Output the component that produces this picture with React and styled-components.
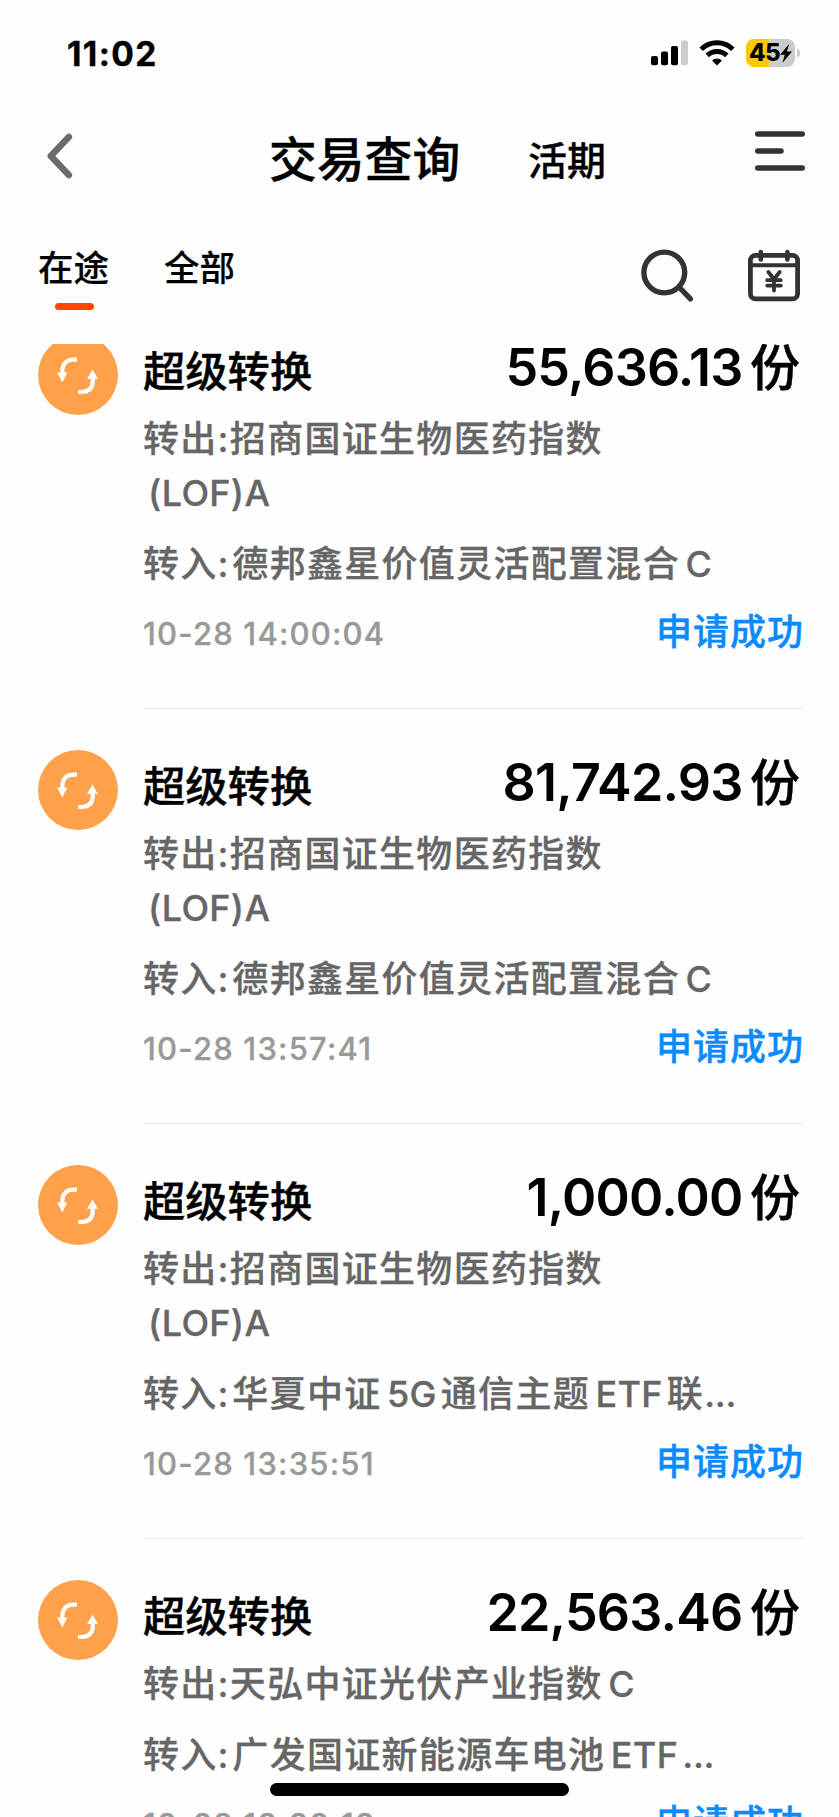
import React from "react"
import styled, { createGlobalStyle } from "styled-components"

const records = [
  {
    id: 1,
    amount: "55,636.13",
    from: ["招商国证生物医药指数", "(LOF)A"],
    to: "德邦鑫星价值灵活配置混合C",
    time: "10-28 14:00:04",
  },
  {
    id: 2,
    amount: "81,742.93",
    from: ["招商国证生物医药指数", "(LOF)A"],
    to: "德邦鑫星价值灵活配置混合C",
    time: "10-28 13:57:41",
  },
  {
    id: 3,
    amount: "1,000.00",
    from: ["招商国证生物医药指数", "(LOF)A"],
    to: "华夏中证5G通信主题ETF联...",
    time: "10-28 13:35:51",
  },
  {
    id: 4,
    amount: "22,563.46",
    from: ["天弘中证光伏产业指数C"],
    to: "广发国证新能源车电池ETF...",
    time: "10-28 13:30:19",
  },
]

// latin runs get a little air around them inside chinese text
function FundName({ text }) {
  const parts = text.match(/[A-Za-z0-9()]+|\.+|[^A-Za-z0-9().]+/g)
  return parts.map((part, i) => {
    if (part[0] === ".") return <Dots key={i}>{part}</Dots>
    if (/^[A-Za-z0-9(]/.test(part)) return <Latin key={i}>{part}</Latin>
    return <span key={i}>{part}</span>
  })
}

function Record({ record }) {
  return (
    <RecordContainer>
      <Badge>
        <svg width="80" height="80" viewBox="0 0 80 80" fill="none">
          <path d="M39 24.7H36C28.5 24.7 24.4 28.5 24.4 36V39" stroke="#fff" strokeWidth="4.2" />
          <path d="M19 37.4H29.4L24.3 47.4Z" fill="#fff" />
          <path d="M40 57H43.4C51 57 54.8 53 54.8 45.6V43" stroke="#fff" strokeWidth="4.2" />
          <path d="M49 44H60L54.5 34.6Z" fill="#fff" />
        </svg>
      </Badge>
      <RecordBody>
        <TitleRow>
          <RecordTitle>超级转换</RecordTitle>
          <Amount>
            {record.amount}
            <Unit>份</Unit>
          </Amount>
        </TitleRow>
        <FundLine>
          转出<Colon>:</Colon>
          <FundName text={record.from[0]} />
        </FundLine>
        {record.from[1] && (
          <FundLine $wrapped>
            <FundName text={record.from[1]} />
          </FundLine>
        )}
        <FundLine $target>
          转入<Colon $wide>:</Colon>
          <FundName text={record.to} />
        </FundLine>
        <FooterRow>
          <Time>{record.time}</Time>
          <Status>申请成功</Status>
        </FooterRow>
      </RecordBody>
    </RecordContainer>
  )
}

function App() {
  return (
    <Page>
      <GlobalStyle />
      <StatusBar>
        <Clock>11:02</Clock>
        <StatusIcons>
          <svg width="37" height="26" viewBox="0 0 37 26">
            <rect x="0" y="16" width="7" height="9.3" rx="2" fill="#000" />
            <rect x="10" y="11.5" width="7" height="13.8" rx="2" fill="#000" />
            <rect x="20" y="6" width="7" height="19.3" rx="2" fill="#000" />
            <rect x="30" y="0.5" width="7" height="24.8" rx="2" fill="#ccc" />
          </svg>
          <svg width="36" height="26" viewBox="0 0 36 26" fill="none">
            <path d="M2.2 9.2A22.6 22.6 0 0 1 33.8 9.2" stroke="#000" strokeWidth="5" />
            <path d="M8.2 15.4A14 14 0 0 1 27.8 15.4" stroke="#000" strokeWidth="5" />
            <path d="M18 25.5L13 20.6A7.2 7.2 0 0 1 23 20.6Z" fill="#000" />
          </svg>
          <Battery>
            <BatteryBody>
              <BatteryLevel>45</BatteryLevel>
              <svg width="12" height="19" viewBox="0 0 12 19">
                <path d="M9.2 0L0 10.8H4.8L2.4 19L12 7.6H6.9Z" fill="#000" />
              </svg>
            </BatteryBody>
            <BatteryCap />
          </Battery>
        </StatusIcons>
      </StatusBar>

      <Header>
        <BackIcon width="26" height="46" viewBox="0 0 26 46" fill="none">
          <path
            d="M21.8 4L3.8 23L21.8 42"
            stroke="#6b6b6b"
            strokeWidth="6.6"
            strokeLinecap="round"
            strokeLinejoin="round"
          />
        </BackIcon>
        <PageTitle>交易查询</PageTitle>
        <SubTitle>活期</SubTitle>
        <MenuIcon width="52" height="40" viewBox="0 0 52 40" fill="none">
          <path
            d="M3.8 3H48.2M3.8 20H27M3.8 37H48.2"
            stroke="#333"
            strokeWidth="5.6"
            strokeLinecap="round"
          />
        </MenuIcon>
      </Header>

      <TabBar>
        <Tab $active>在途</Tab>
        <Tab>全部</Tab>
        <Tools>
          <svg width="54" height="54" viewBox="0 0 54 54" fill="none">
            <circle cx="24.3" cy="24.5" r="20.4" stroke="#333" strokeWidth="5.4" />
            <path d="M39.5 39.5L50.4 50.8" stroke="#333" strokeWidth="5.4" strokeLinecap="round" />
          </svg>
          <svg width="52" height="54" viewBox="0 0 52 54" fill="none">
            <rect x="2.4" y="7.4" width="47.2" height="43.4" rx="5" stroke="#333" strokeWidth="4.8" />
            <path d="M2.4 17.2H49.6" stroke="#333" strokeWidth="4" />
            <path d="M12.8 4V11.5M39.4 4V11.5" stroke="#333" strokeWidth="4.6" strokeLinecap="round" />
            <path
              d="M20.3 24L26 31.2L31.7 24M26 31.2V42.5M19.2 32.2H32.8M19.2 37.6H32.8"
              stroke="#333"
              strokeWidth="3.8"
              strokeLinecap="round"
            />
          </svg>
        </Tools>
      </TabBar>

      <ListViewport>
        <List>
          {records.map((record) => (
            <Record key={record.id} record={record} />
          ))}
        </List>
      </ListViewport>
      <HomeIndicator />
    </Page>
  )
}

const GlobalStyle = createGlobalStyle`
  * {
    box-sizing: border-box;
  }
  body {
    margin: 0;
    background: #fefefe;
  }
  svg {
    display: block;
    flex-shrink: 0;
  }
`

const Page = styled.div`
  position: relative;
  display: flex;
  flex-direction: column;
  width: 839px;
  height: 1817px;
  overflow: hidden;
  background: #fefefe;
  color: #000;
  font-family: Inter, "Noto Sans CJK SC", sans-serif;
  font-weight: 500;
  white-space: nowrap;
`

const StatusBar = styled.div`
  display: flex;
  justify-content: space-between;
  align-items: center;
  height: 106px;
  padding: 0 39px 0 67px;
`

const Clock = styled.div`
  padding-top: 2px;
  font-size: 33.5px;
  font-weight: 700;
  line-height: 40px;
  letter-spacing: 1.4px;
  -webkit-text-stroke: 0.4px currentColor;
`

const StatusIcons = styled.div`
  display: flex;
  align-items: center;
  gap: 11px;
`

const Battery = styled.div`
  display: flex;
  align-items: center;
  gap: 2px;
`

const BatteryBody = styled.div`
  display: flex;
  align-items: center;
  justify-content: center;
  width: 49px;
  height: 28px;
  border-radius: 8px;
  background: linear-gradient(90deg, #ffc800 46%, #ccc 46%);
`

const BatteryLevel = styled.span`
  font-size: 24px;
  font-weight: 800;
  line-height: 28px;
  letter-spacing: -0.5px;
`

const BatteryCap = styled.div`
  width: 3px;
  height: 8px;
  border-radius: 0 3px 3px 0;
  background: #ccc;
`

const Header = styled.div`
  display: grid;
  grid-template-columns: 222px 259px 226px 52px;
  align-items: center;
  height: 110px;
  padding-left: 47px;
`

const BackIcon = styled.svg`
  margin-bottom: 11px;
`

const MenuIcon = styled.svg`
  margin-bottom: 20px;
`

const PageTitle = styled.h1`
  margin: 0 0 2px;
  font-size: 47.8px;
  font-weight: 500;
  line-height: 60px;
  -webkit-text-stroke: 0.4px currentColor;
`

const SubTitle = styled.div`
  margin-bottom: 1px;
  font-size: 39px;
  line-height: 60px;
  -webkit-text-stroke: 0.3px currentColor;
`

const TabBar = styled.div`
  display: flex;
  align-items: flex-start;
  height: 128px;
  padding: 32px 39px 0 38px;
`

const Tab = styled.div`
  display: flex;
  flex-direction: column;
  align-items: center;
  margin-right: 55px;
  padding-top: 1px;
  font-size: 35.5px;
  line-height: 40px;
  -webkit-text-stroke: 0.2px currentColor;
  &::after {
    content: "";
    width: 39px;
    height: 7px;
    margin: 14px 0 0 1px;
    border-radius: 4px;
    background: ${(props) => (props.$active ? "#ff4400" : "transparent")};
  }
`

const Tools = styled.div`
  display: flex;
  gap: 54px;
  margin-left: auto;
`

const ListViewport = styled.div`
  flex: 1;
  min-height: 0;
  overflow: hidden;
`

const List = styled.div`
  margin-top: -9px;
`

const RecordContainer = styled.div`
  display: flex;
  padding: 0 35px 41px 38px;
`

const Badge = styled.div`
  width: 80px;
  height: 80px;
  margin-right: 25px;
  border-radius: 50%;
  background: #ffa04b;
`

const RecordBody = styled.div`
  flex: 1;
  padding-bottom: 46px;
  border-bottom: 1px solid #ececec;
`

const TitleRow = styled.div`
  display: flex;
  justify-content: space-between;
  height: 77px;
`

const RecordTitle = styled.div`
  font-size: 42.3px;
  line-height: 73px;
  -webkit-text-stroke: 0.4px currentColor;
`

const Amount = styled.div`
  display: flex;
  padding-right: 4px;
  font-size: 52px;
  font-weight: 600;
  line-height: 66px;
  letter-spacing: -0.8px;
`

const Unit = styled.span`
  margin-left: 7.5px;
  font-size: 50px;
  font-weight: 500;
  letter-spacing: 0;
  -webkit-text-stroke: 0.4px currentColor;
`

const FundLine = styled.div`
  height: 54px;
  margin-top: ${(props) => (props.$target ? "17px" : "0")};
  padding-left: ${(props) => (props.$wrapped ? "5px" : "0")};
  color: #666;
  font-size: 36px;
  line-height: 54px;
  letter-spacing: 1.3px;
  -webkit-text-stroke: 0.3px currentColor;
`

const Colon = styled.span`
  margin-right: ${(props) => (props.$wide ? "2.5px" : "0")};
`

const Latin = styled.span`
  margin: 0 4px 0 5.5px;
  letter-spacing: 0.3px;
  ${FundLine} > &:first-child {
    margin-left: 0;
  }
`

const Dots = styled.span`
  letter-spacing: -0.2px;
`

const FooterRow = styled.div`
  display: flex;
  justify-content: space-between;
  height: 54px;
  margin-top: 17px;
`

const Time = styled.div`
  color: #999;
  font-size: 31px;
  line-height: 52px;
  letter-spacing: 1.2px;
  -webkit-text-stroke: 0.3px currentColor;
`

const Status = styled.div`
  color: #0a8aff;
  font-size: 36px;
  line-height: 49px;
  letter-spacing: 1px;
  -webkit-text-stroke: 0.4px currentColor;
`

// sits over the last record
const HomeIndicator = styled.div`
  position: absolute;
  left: 270px;
  bottom: 21px;
  width: 299px;
  height: 13px;
  border-radius: 7px;
  background: #000;
`

export default App
